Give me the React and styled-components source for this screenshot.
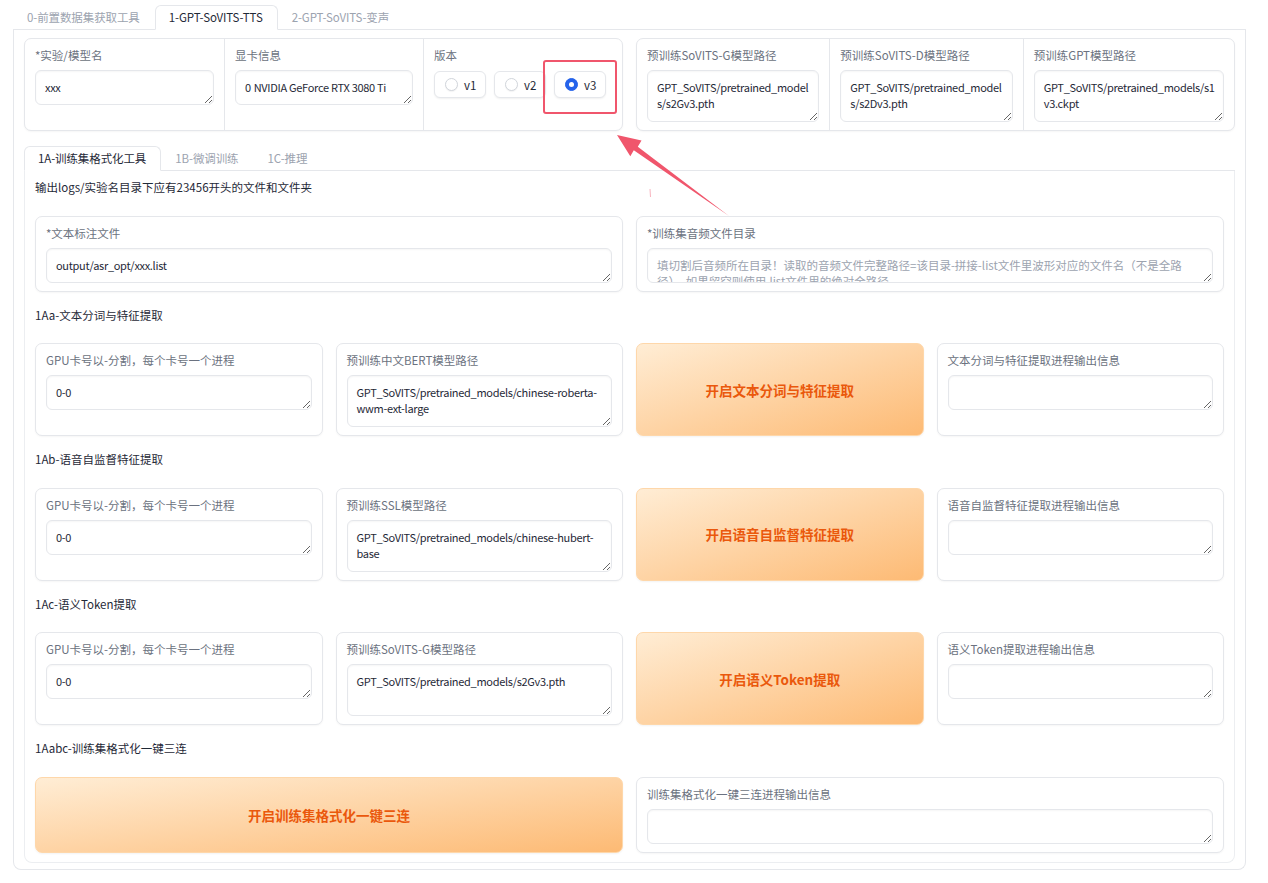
import styled, { createGlobalStyle } from "styled-components";

const GlobalStyle = createGlobalStyle`
  html, body {
    margin: 0;
    padding: 0;
    background: #ffffff;
    overflow: hidden;
  }
  body {
    font-family: "Noto Sans CJK SC", "Noto Sans", sans-serif;
    color: #1f2937;
  }
  * {
    box-sizing: border-box;
  }
`;

const App = () => {
  return (
    <>
      <GlobalStyle />
      <Page>
        <TabNav>
          <Tab>0-前置数据集获取工具</Tab>
          <Tab $active>1-GPT-SoVITS-TTS</Tab>
          <Tab>2-GPT-SoVITS-变声</Tab>
        </TabNav>
        <OuterPanel>
          <TopRow>
            <FormBlock $cols="1fr 1fr 1fr">
              <Field>
                <Label>*实验/模型名</Label>
                <Input $h={35} defaultValue="xxx" />
              </Field>
              <Field>
                <Label>显卡信息</Label>
                <Input $h={35} defaultValue="0	NVIDIA GeForce RTX 3080 Ti" />
              </Field>
              <Field>
                <Label>版本</Label>
                <RadioGroup>
                  <RadioItem>
                    <RadioDot />
                    v1
                  </RadioItem>
                  <RadioItem>
                    <RadioDot />
                    v2
                  </RadioItem>
                  <RadioItem>
                    <RadioDot $checked />
                    v3
                  </RadioItem>
                </RadioGroup>
              </Field>
            </FormBlock>
            <FormBlock $cols="193fr 194fr 212fr">
              <Field>
                <Label>预训练SoVITS-G模型路径</Label>
                <Input $h={52} defaultValue="GPT_SoVITS/pretrained_models/s2Gv3.pth" />
              </Field>
              <Field>
                <Label>预训练SoVITS-D模型路径</Label>
                <Input $h={52} defaultValue="GPT_SoVITS/pretrained_models/s2Dv3.pth" />
              </Field>
              <Field>
                <Label>预训练GPT模型路径</Label>
                <Input $h={52} defaultValue="GPT_SoVITS/pretrained_models/s1v3.ckpt" />
              </Field>
            </FormBlock>
          </TopRow>

          <InnerTabs>
            <TabNav>
              <Tab $active>1A-训练集格式化工具</Tab>
              <Tab>1B-微调训练</Tab>
              <Tab>1C-推理</Tab>
            </TabNav>
            <InnerPanel>
              <Heading>输出logs/实验名目录下应有23456开头的文件和文件夹</Heading>
              <Grid $cols={2}>
                <Card>
                  <Label>*文本标注文件</Label>
                  <Input $h={35} defaultValue="output/asr_opt/xxx.list" />
                </Card>
                <Card>
                  <Label>*训练集音频文件目录</Label>
                  <Input
                    $h={35}
                    placeholder="填切割后音频所在目录！读取的音频文件完整路径=该目录-拼接-list文件里波形对应的文件名（不是全路径）。如果留空则使用.list文件里的绝对全路径。"
                  />
                </Card>
              </Grid>

              <Heading>1Aa-文本分词与特征提取</Heading>
              <Grid $cols={4}>
                <Card>
                  <Label>GPU卡号以-分割，每个卡号一个进程</Label>
                  <Input $h={35} defaultValue="0-0" />
                </Card>
                <Card>
                  <Label>预训练中文BERT模型路径</Label>
                  <Input
                    $h={52}
                    defaultValue="GPT_SoVITS/pretrained_models/chinese-roberta-wwm-ext-large"
                  />
                </Card>
                <PrimaryButton>开启文本分词与特征提取</PrimaryButton>
                <Card>
                  <Label>文本分词与特征提取进程输出信息</Label>
                  <Input $h={35} />
                </Card>
              </Grid>

              <Heading>1Ab-语音自监督特征提取</Heading>
              <Grid $cols={4}>
                <Card>
                  <Label>GPU卡号以-分割，每个卡号一个进程</Label>
                  <Input $h={35} defaultValue="0-0" />
                </Card>
                <Card>
                  <Label>预训练SSL模型路径</Label>
                  <Input
                    $h={52}
                    defaultValue="GPT_SoVITS/pretrained_models/chinese-hubert-base"
                  />
                </Card>
                <PrimaryButton>开启语音自监督特征提取</PrimaryButton>
                <Card>
                  <Label>语音自监督特征提取进程输出信息</Label>
                  <Input $h={35} />
                </Card>
              </Grid>

              <Heading>1Ac-语义Token提取</Heading>
              <Grid $cols={4}>
                <Card>
                  <Label>GPU卡号以-分割，每个卡号一个进程</Label>
                  <Input $h={35} defaultValue="0-0" />
                </Card>
                <Card>
                  <Label>预训练SoVITS-G模型路径</Label>
                  <Input $h={52} defaultValue="GPT_SoVITS/pretrained_models/s2Gv3.pth" />
                </Card>
                <PrimaryButton>开启语义Token提取</PrimaryButton>
                <Card>
                  <Label>语义Token提取进程输出信息</Label>
                  <Input $h={35} />
                </Card>
              </Grid>

              <Heading>1Aabc-训练集格式化一键三连</Heading>
              <Grid $cols={2}>
                <PrimaryButton>开启训练集格式化一键三连</PrimaryButton>
                <Card>
                  <Label>训练集格式化一键三连进程输出信息</Label>
                  <Input $h={35} />
                </Card>
              </Grid>
            </InnerPanel>
          </InnerTabs>
        </OuterPanel>

        {/* screenshot annotation: highlight box + arrow */}
        <Annotation width="1268" height="883" viewBox="0 0 1268 883">
          <rect x="544" y="61" width="72" height="52" rx="2" fill="none" stroke="#f0566c" strokeWidth="2" />
          <polygon
            points="617,135 641.5,140.6 637.8,146.8 729,216 633.8,150.2 630.3,156.2"
            fill="#f0566c"
          />
          <line x1="650" y1="189" x2="650.5" y2="197" stroke="#f8b4bf" strokeWidth="1" />
        </Annotation>
      </Page>
    </>
  );
};

export default App;

const Page = styled.div`
  position: relative;
  width: 1268px;
  height: 883px;
  padding: 5px 22px 0 13px;
`;

const Annotation = styled.svg`
  position: absolute;
  top: 0;
  left: 0;
  pointer-events: none;
`;

const TabNav = styled.div`
  display: flex;
  border-bottom: 1px solid #e5e7eb;
`;

const Tab = styled.div`
  height: 25px;
  line-height: 23px;
  padding: 0 14px 0 13px;
  font-size: 11.5px;
  letter-spacing: -0.1px;
  white-space: nowrap;
  margin-bottom: -1px;
  border: 1px solid ${(p) => (p.$active ? "#e5e7eb" : "transparent")};
  border-bottom-color: ${(p) => (p.$active ? "#ffffff" : "transparent")};
  border-radius: 6px 6px 0 0;
  background: ${(p) => (p.$active ? "#ffffff" : "transparent")};
  color: ${(p) => (p.$active ? "#1f2937" : "#9ca3af")};
`;

const OuterPanel = styled.div`
  border: 1px solid #e5e7eb;
  border-top: none;
  border-radius: 0 0 8px 8px;
  padding: 8px 10px 6px;
`;

const TopRow = styled.div`
  display: grid;
  grid-template-columns: 1fr 1fr;
  gap: 13px;
`;

const FormBlock = styled.div`
  display: grid;
  grid-template-columns: ${(p) => p.$cols};
  border: 1px solid #e5e7eb;
  border-radius: 7px;
  box-shadow: 0 1px 2px rgba(0, 0, 0, 0.04);
  overflow: hidden;
  background: #ffffff;
`;

const Field = styled.div`
  padding: 8px 10px 8px 10px;
  & + & {
    border-left: 1px solid #e5e7eb;
  }
`;

const Label = styled.div`
  font-size: 11.5px;
  line-height: 16px;
  color: #6b7280;
  margin-bottom: 7px;
  white-space: nowrap;
`;

const Input = styled.textarea`
  display: block;
  width: 100%;
  height: ${(p) => p.$h}px;
  border: 1px solid #e5e7eb;
  border-radius: 6px;
  padding: 8px 6px 8px 9px;
  font-family: "Noto Sans CJK SC", "Noto Sans", sans-serif;
  font-size: 11px;
  letter-spacing: -0.3px;
  line-height: 16px;
  color: #1f2937;
  background: #ffffff;
  box-shadow: inset 0 1px 2px rgba(0, 0, 0, 0.04);
  resize: vertical;
  outline: none;
  overflow: hidden;
  tab-size: 1;

  &::placeholder {
    color: #9ca3af;
    letter-spacing: 0;
    font-size: 11.5px;
  }
`;

const RadioGroup = styled.div`
  display: flex;
  gap: 8px;
  padding-top: 1px;
`;

const RadioItem = styled.label`
  display: flex;
  align-items: center;
  gap: 6px;
  width: 52px;
  height: 27px;
  padding: 0 10px;
  border: 1px solid #e5e7eb;
  border-radius: 6px;
  background: #ffffff;
  box-shadow: 0 1px 2px rgba(0, 0, 0, 0.06);
  font-size: 11.5px;
  color: #1f2937;
`;

const RadioDot = styled.span`
  width: 13px;
  height: 13px;
  border-radius: 50%;
  flex-shrink: 0;
  background: ${(p) => (p.$checked ? "#2563eb" : "#ffffff")};
  border: 1px solid ${(p) => (p.$checked ? "#2563eb" : "#d1d5db")};
  box-shadow: ${(p) => (p.$checked ? "none" : "0 1px 1px rgba(0,0,0,0.05)")};
  position: relative;

  &::after {
    content: "";
    display: ${(p) => (p.$checked ? "block" : "none")};
    position: absolute;
    top: 3px;
    left: 3px;
    width: 5px;
    height: 5px;
    border-radius: 50%;
    background: #ffffff;
  }
`;

const InnerTabs = styled.div`
  margin-top: 15px;
`;

const InnerPanel = styled.div`
  display: flex;
  flex-direction: column;
  gap: 13px;
  border: 1px solid #eceef1;
  border-top: none;
  border-radius: 0 0 8px 8px;
  padding: 6px 10px 9px;
`;

const Heading = styled.div`
  font-size: 11.5px;
  line-height: 20px;
  padding-bottom: 5.5px;
  color: #1f2937;
`;

const Grid = styled.div`
  display: grid;
  grid-template-columns: repeat(${(p) => p.$cols}, 1fr);
  gap: 13px;
`;

const Card = styled.div`
  border: 1px solid #e5e7eb;
  border-radius: 7px;
  padding: 8px 10px;
  background: #ffffff;
  box-shadow: 0 1px 2px rgba(0, 0, 0, 0.04);
  min-width: 0;
`;

const PrimaryButton = styled.button`
  display: flex;
  align-items: center;
  justify-content: center;
  border: 1px solid #fed7aa;
  border-radius: 7px;
  background: linear-gradient(to bottom right, #ffedd5, #fdba74);
  box-shadow: 0 1px 2px rgba(0, 0, 0, 0.05);
  color: #ea580c;
  font-family: "Noto Sans CJK SC", "Noto Sans", sans-serif;
  font-size: 13.5px;
  font-weight: 700;
  cursor: pointer;
`;
